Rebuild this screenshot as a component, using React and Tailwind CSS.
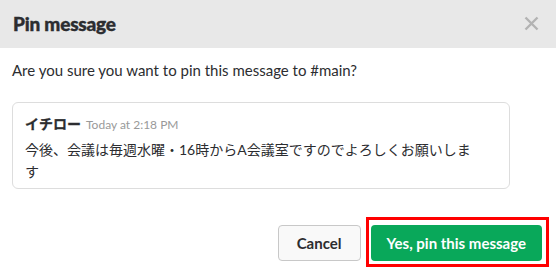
import React from 'react';

const PinMessageDialog = () => {
  return (
    <div className="w-[556px] h-[273px] bg-white text-[#2c2d30] overflow-hidden" style={{ fontFamily: 'Lato, "Noto Sans CJK JP", sans-serif' }}>
      {/* Header */}
      <div className="h-12 bg-[#e8e8e8] flex items-center justify-between pl-[13px] pr-[17px]">
        <h1 className="text-[19px] font-black text-[#2c2d30] tracking-[-0.2px] [-webkit-text-stroke:0.4px_#2c2d30]">Pin message</h1>
        <button className="text-[#b3b3b3] -mt-[2px]">
          <svg width="15" height="15" viewBox="0 0 15 15">
            <path d="M1.5 1.5 L13.5 13.5 M13.5 1.5 L1.5 13.5" stroke="currentColor" strokeWidth="2.4" />
          </svg>
        </button>
      </div>

      {/* Body */}
      <div className="px-3 pt-[12px]">
        <p className="text-[15px] leading-5">Are you sure you want to pin this message to #main?</p>

        <div className="mt-[22px] border border-[#dddddd] rounded-md pl-[12px] pr-[30px] pt-[11px] pb-[5px] w-[498px]">
          <div className="flex items-baseline gap-[5px] leading-5">
            <span className="text-[14px] font-bold [-webkit-text-stroke:0.3px_#2c2d30]">イチロー</span>
            <span className="text-[12px] text-[#999999]">Today at 2:18 PM</span>
          </div>
          <p className="text-[14px] leading-[22px] mt-[4px]">今後、会議は毎週水曜・16時からA会議室ですのでよろしくお願いします</p>
        </div>
      </div>

      {/* Footer */}
      <div className="flex justify-end items-center gap-[10px] pr-[14px] mt-[36px]">
        <button className="h-9 px-[18px] rounded-[4px] border border-[#c8c8c8] bg-[#f9f9f9] text-[15px] font-bold text-[#2c2d30]">
          Cancel
        </button>
        <button className="relative h-9 px-[16px] rounded-[4px] bg-[#09a85a] text-[15px] font-bold text-white">
          Yes, pin this message
          <span className="absolute -top-2 -bottom-1.5 -left-[5px] -right-[7px] border-[3px] border-[#ff0000] pointer-events-none"></span>
        </button>
      </div>
    </div>
  );
};

export default function App() {
  return <PinMessageDialog />;
}
